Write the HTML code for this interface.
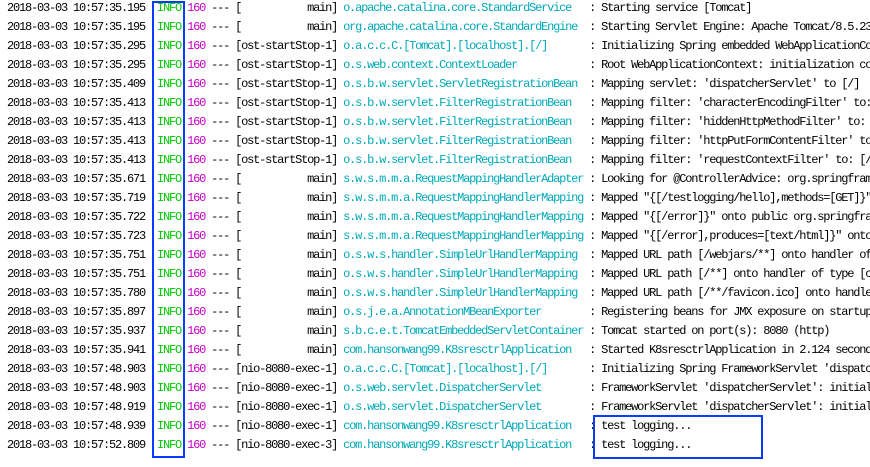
<!DOCTYPE html>
<html style="overflow:hidden"><head><meta charset="utf-8"><style>
html,body{overflow:hidden}
body{margin:0;width:870px;height:467px;background:#fff;position:relative}
pre{position:absolute;left:7px;top:-1px;margin:0;font-family:"Liberation Mono",monospace;font-size:12px;letter-spacing:-1.2px;line-height:19px;color:#000;white-space:pre;width:863px;overflow:hidden}
.g{color:#00c800}.m{color:#c800c8}.c{color:#00a8b8}
.box{position:absolute;border:2px solid #0a3cff}
</style></head><body>
<pre>2018-03-03 10:57:35.195  <span class="g">INFO</span> <span class="m">160</span> --- [           main] <span class="c">o.apache.catalina.core.StandardService  </span> : Starting service [Tomcat]
2018-03-03 10:57:35.195  <span class="g">INFO</span> <span class="m">160</span> --- [           main] <span class="c">org.apache.catalina.core.StandardEngine </span> : Starting Servlet Engine: Apache Tomcat/8.5.23
2018-03-03 10:57:35.295  <span class="g">INFO</span> <span class="m">160</span> --- [ost-startStop-1] <span class="c">o.a.c.c.C.[Tomcat].[localhost].[/]      </span> : Initializing Spring embedded WebApplicationContext
2018-03-03 10:57:35.295  <span class="g">INFO</span> <span class="m">160</span> --- [ost-startStop-1] <span class="c">o.s.web.context.ContextLoader           </span> : Root WebApplicationContext: initialization completed
2018-03-03 10:57:35.409  <span class="g">INFO</span> <span class="m">160</span> --- [ost-startStop-1] <span class="c">o.s.b.w.servlet.ServletRegistrationBean </span> : Mapping servlet: 'dispatcherServlet' to [/]
2018-03-03 10:57:35.413  <span class="g">INFO</span> <span class="m">160</span> --- [ost-startStop-1] <span class="c">o.s.b.w.servlet.FilterRegistrationBean  </span> : Mapping filter: 'characterEncodingFilter' to: [/*]
2018-03-03 10:57:35.413  <span class="g">INFO</span> <span class="m">160</span> --- [ost-startStop-1] <span class="c">o.s.b.w.servlet.FilterRegistrationBean  </span> : Mapping filter: 'hiddenHttpMethodFilter' to: [/*]
2018-03-03 10:57:35.413  <span class="g">INFO</span> <span class="m">160</span> --- [ost-startStop-1] <span class="c">o.s.b.w.servlet.FilterRegistrationBean  </span> : Mapping filter: 'httpPutFormContentFilter' to: [/*]
2018-03-03 10:57:35.413  <span class="g">INFO</span> <span class="m">160</span> --- [ost-startStop-1] <span class="c">o.s.b.w.servlet.FilterRegistrationBean  </span> : Mapping filter: 'requestContextFilter' to: [/*]
2018-03-03 10:57:35.671  <span class="g">INFO</span> <span class="m">160</span> --- [           main] <span class="c">s.w.s.m.m.a.RequestMappingHandlerAdapter</span> : Looking for @ControllerAdvice: org.springframework
2018-03-03 10:57:35.719  <span class="g">INFO</span> <span class="m">160</span> --- [           main] <span class="c">s.w.s.m.m.a.RequestMappingHandlerMapping</span> : Mapped "{[/testlogging/hello],methods=[GET]}"
2018-03-03 10:57:35.722  <span class="g">INFO</span> <span class="m">160</span> --- [           main] <span class="c">s.w.s.m.m.a.RequestMappingHandlerMapping</span> : Mapped "{[/error]}" onto public org.springframework
2018-03-03 10:57:35.723  <span class="g">INFO</span> <span class="m">160</span> --- [           main] <span class="c">s.w.s.m.m.a.RequestMappingHandlerMapping</span> : Mapped "{[/error],produces=[text/html]}" onto
2018-03-03 10:57:35.751  <span class="g">INFO</span> <span class="m">160</span> --- [           main] <span class="c">o.s.w.s.handler.SimpleUrlHandlerMapping </span> : Mapped URL path [/webjars/**] onto handler of
2018-03-03 10:57:35.751  <span class="g">INFO</span> <span class="m">160</span> --- [           main] <span class="c">o.s.w.s.handler.SimpleUrlHandlerMapping </span> : Mapped URL path [/**] onto handler of type [c
2018-03-03 10:57:35.780  <span class="g">INFO</span> <span class="m">160</span> --- [           main] <span class="c">o.s.w.s.handler.SimpleUrlHandlerMapping </span> : Mapped URL path [/**/favicon.ico] onto handler
2018-03-03 10:57:35.897  <span class="g">INFO</span> <span class="m">160</span> --- [           main] <span class="c">o.s.j.e.a.AnnotationMBeanExporter       </span> : Registering beans for JMX exposure on startup
2018-03-03 10:57:35.937  <span class="g">INFO</span> <span class="m">160</span> --- [           main] <span class="c">s.b.c.e.t.TomcatEmbeddedServletContainer</span> : Tomcat started on port(s): 8080 (http)
2018-03-03 10:57:35.941  <span class="g">INFO</span> <span class="m">160</span> --- [           main] <span class="c">com.hansonwang99.K8sresctrlApplication  </span> : Started K8sresctrlApplication in 2.124 seconds
2018-03-03 10:57:48.903  <span class="g">INFO</span> <span class="m">160</span> --- [nio-8080-exec-1] <span class="c">o.a.c.c.C.[Tomcat].[localhost].[/]      </span> : Initializing Spring FrameworkServlet 'dispatcherServlet'
2018-03-03 10:57:48.903  <span class="g">INFO</span> <span class="m">160</span> --- [nio-8080-exec-1] <span class="c">o.s.web.servlet.DispatcherServlet       </span> : FrameworkServlet 'dispatcherServlet': initial
2018-03-03 10:57:48.919  <span class="g">INFO</span> <span class="m">160</span> --- [nio-8080-exec-1] <span class="c">o.s.web.servlet.DispatcherServlet       </span> : FrameworkServlet 'dispatcherServlet': initial
2018-03-03 10:57:48.939  <span class="g">INFO</span> <span class="m">160</span> --- [nio-8080-exec-1] <span class="c">com.hansonwang99.K8sresctrlApplication  </span> : test logging...
2018-03-03 10:57:52.809  <span class="g">INFO</span> <span class="m">160</span> --- [nio-8080-exec-3] <span class="c">com.hansonwang99.K8sresctrlApplication  </span> : test logging...</pre>
<div class="box" style="left:152px;top:1px;width:29px;height:453px"></div>
<div class="box" style="left:593px;top:415px;width:166px;height:40px"></div>
</body></html>
